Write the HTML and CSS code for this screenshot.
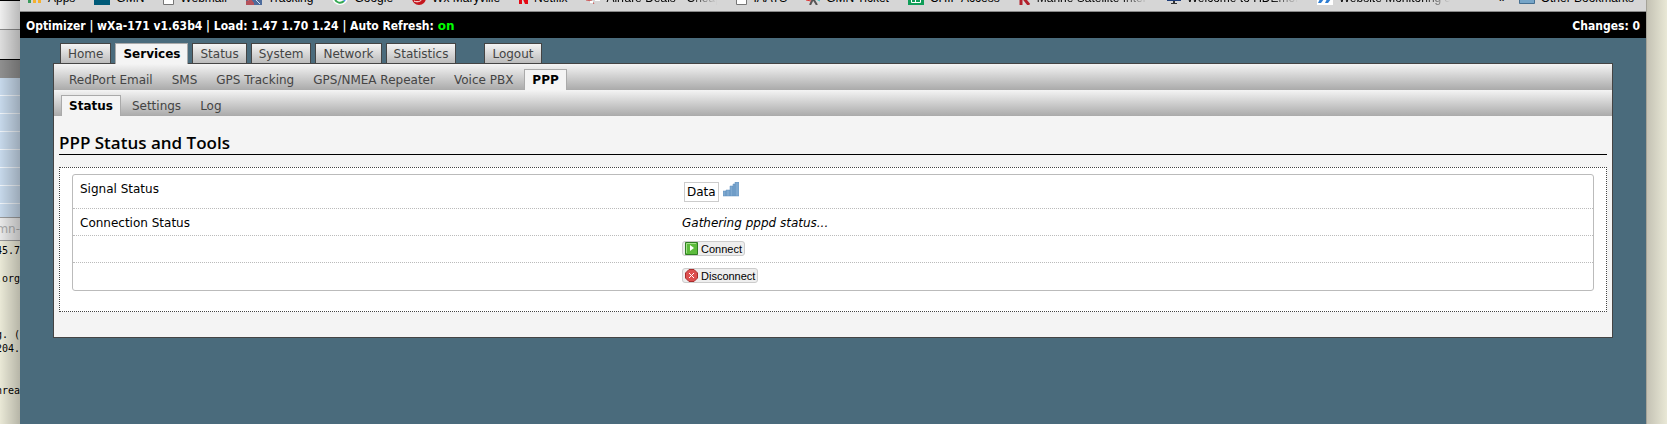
FILE: index.html
```html
<!DOCTYPE html>
<html lang="en">
<head>
    <meta charset="UTF-8">
    <meta name="viewport" content="width=device-width, initial-scale=1.0">
    <title>wXa-171 - PPP Status and Tools</title>
    <link rel="stylesheet" href="styles.css">
</head>
<body>
    <div class="desktop">
        <aside class="back-window">
            <div class="back-title"></div>
            <div class="back-toolbar"></div>
            <div class="back-header"></div>
            <div class="back-list"></div>
            <div class="back-tab">mn-</div>
            <pre class="terminal">
45.7

.org



g. (
204.


hrea</pre>
        </aside>

        <div class="browser">
            <nav class="bookmarks">
                <a href="#"><svg width="14" height="14"><path fill="#3a9b5c" d="M0 9h3v3H0zM0 4h3v3H0z"/><path fill="#f5b02d" d="M5 9h3v3H5zM10 9h3v3h-3zM5 4h3v3H5zM10 4h3v3h-3z"/></svg>Apps</a>
                <a href="#"><svg width="16" height="14"><path fill="#005a78" d="M0 0h16v14H0z"/></svg>GMN</a>
                <a href="#"><svg width="11" height="14"><path fill="#fff" stroke="#777" d="M.5.5h10v13H.5z"/></svg>Webmail</a>
                <a href="#"><svg width="16" height="14"><path fill="#4d6c9c" d="M0 0h16v14H0z"/><path fill="#b5525b" d="M0 14v-4l5-2 3 4v2z"/><path fill="none" stroke="#d8e2ef" d="M2 9l5-3 7 7"/></svg>Tracking</a>
                <a href="#"><svg width="16" height="14"><circle cx="8" cy="6" r="8" fill="#fff"/><path fill="none" stroke="#34a853" stroke-width="2" d="M3 8c1 4 6 5 9 2"/><path fill="none" stroke="#4285f4" stroke-width="2" d="M8 6h5c0 2 0 3-1 4"/></svg>Google</a>
                <a href="#"><svg width="14" height="14"><circle cx="7" cy="7" r="7" fill="#c4161c"/><path fill="none" stroke="#fff" d="M2 10c4 2 8 0 9-4"/></svg>Wx Maryville</a>
                <a href="#"><svg width="9" height="14"><path fill="#e50914" d="M0 0h3l3 7V0h3v13H6L3 6v7H0z"/></svg>Netflix</a>
                <a href="#"><svg width="14" height="14"><path fill="none" stroke="#c55" d="M0 9l6 1 2 3"/><path stroke="#fff" stroke-width="2" d="M4 11h3M9 9h5"/></svg><span class="fade">Airfare Deals - Cheap</span></a>
                <a href="#"><svg width="11" height="14"><path fill="#fff" stroke="#777" d="M.5.5h10v13H.5z"/></svg>IAATS</a>
                <a href="#"><svg width="14" height="14"><path fill="none" stroke="#555" stroke-width="2" d="M6 6l5 8M7 8l-3 6"/><path stroke="#d33" d="M0 9l5 1"/><path stroke="#3bb" d="M10 8l4 2"/></svg>GMN Ticket</a>
                <a href="#"><svg width="16" height="14"><path fill="#0f9d58" d="M0 0h16v14H0z"/><path fill="none" stroke="#fff" d="M3.500 3.500h9v8h-9zM3 8.500h9M7.500 3v8"/></svg>CHIP Access</a>
                <a href="#"><svg width="12" height="14"><path fill="none" stroke="#b3202c" stroke-width="3" d="M2 0v14M3 5l7 9"/></svg><span class="fade">Marine Satellite Inter</span></a>
                <a href="#"><svg width="14" height="14"><path fill="#1d3c78" d="M0 2h14v8H0z"/><path fill="#333" d="M6 10h2v2h2v1H4v-1h2z"/></svg><span class="fade">Welcome to HDEmon</span></a>
                <a href="#"><svg width="16" height="14"><path fill="#fff" d="M0 0h16v14H0z"/><path fill="#2d7dd2" d="M2 4h5v4l-3 4H1l2-4zM9 4h5v4l-3 4H8l2-4z"/></svg><span class="fade">Website Monitoring &amp; S</span></a>
                <a href="#" class="more">»</a>
                <a href="#"><svg width="16" height="14"><path fill="#76a5c8" stroke="#456f91" d="M.5.500h15v12H.5z"/></svg>Other Bookmarks</a>
            </nav>

            <header class="status-bar">
                <div>Optimizer | wXa-171 v1.63b4 | Load: 1.47 1.70 1.24 | Auto Refresh: <span class="on">on</span></div>
                <div>Changes: 0</div>
            </header>

            <div class="page">
                <nav class="main-menu">
                    <a href="#">Home</a>
                    <a href="#" class="active">Services</a>
                    <a href="#">Status</a>
                    <a href="#">System</a>
                    <a href="#">Network</a>
                    <a href="#">Statistics</a>
                    <a href="#" class="logout">Logout</a>
                </nav>

                <main class="content">
                    <nav class="sub-menu">
                        <a href="#">RedPort Email</a>
                        <a href="#">SMS</a>
                        <a href="#">GPS Tracking</a>
                        <a href="#">GPS/NMEA Repeater</a>
                        <a href="#">Voice PBX</a>
                        <a href="#" class="active">PPP</a>
                    </nav>
                    <nav class="sub-menu">
                        <a href="#" class="active">Status</a>
                        <a href="#">Settings</a>
                        <a href="#">Log</a>
                    </nav>

                    <section class="section">
                        <h2>PPP Status and Tools</h2>
                        <div class="panel">
                            <div class="settings">
                                <div class="row row-signal">
                                    <div>Signal Status</div>
                                    <div class="signal">
                                        <span class="signal-type">Data</span>
                                        <svg width="16" height="16" viewBox="0 0 16 16"><path fill="#7fa9d0" stroke="#5f8fbd" stroke-width=".5" d="M0 9h3v5H0zM3 8h4v6H3zM7 4h3v10H7zM10 2h2v12h-2zM12 0h4v14h-4z"/></svg>
                                    </div>
                                </div>
                                <div class="row">
                                    <div>Connection Status</div>
                                    <div><em>Gathering pppd status...</em></div>
                                </div>
                                <div class="row row-button">
                                    <div></div>
                                    <div><button type="button"><svg width="13" height="13" viewBox="0 0 13 13"><path fill="#5cbb3c" stroke="#2f7d22" d="M.5.5h12v12H.5z"/><path fill="none" stroke="#a5e08c" d="M1.500 11V1.500H11"/><path fill="#fff" d="M5 3l4 3-4 3z"/></svg>Connect</button></div>
                                </div>
                                <div class="row row-button">
                                    <div></div>
                                    <div><button type="button"><svg width="13" height="13" viewBox="0 0 13 13"><path fill="#dd4f4f" stroke="#a82c2c" d="M4 .5h5L12.500 4v5L9 12.500H4L.5 9V4z"/><path fill="none" stroke="#fff" d="M4 4l5 5M9 4L4 9"/></svg>Disconnect</button></div>
                                </div>
                            </div>
                        </div>
                    </section>
                </main>
            </div>
        </div>

        <div class="desktop-edge"></div>
    </div>
</body>
</html>
```

FILE: styles.css
```css
:root {
    --page-color: #4a6b7c;
    --content-color: #f4f4f4;
    --border-color: #444;
    --desktop-color: #e9e8d6;
}

* {
    box-sizing: border-box;
}

body {
    margin: 0;
    font-family: Verdana, "DejaVu Sans", sans-serif;
    font-size: 12px;
    line-height: 16px;
    color: #000;
    background: var(--desktop-color);
}

a {
    color: inherit;
    text-decoration: none;
}

.desktop {
    display: grid;
    grid-template-columns: 20px minmax(0, 1fr) 21px;
    height: 100vh;
    overflow: hidden;
}

/* windows behind the browser */
.back-window {
    position: relative;
    overflow: hidden;
}

.back-window::after {
    content: "";
    position: absolute;
    inset: 0;
    background: linear-gradient(to right, transparent, rgba(0, 0, 0, 0.22));
}

.back-title {
    height: 30px;
    border-top: 1px solid #000;
    border-bottom: 1px solid #888;
    background: #eee;
}

.back-toolbar {
    height: 30px;
    border-bottom: 1px solid #000;
    background: #ddd;
}

.back-header {
    height: 18px;
    background: #8f8f8f;
}

.back-list {
    height: 140px;
    border-bottom: 1px solid #999;
    background: repeating-linear-gradient(#c6d8ea 0 17px, #eef3f8 17px 18px);
}

.back-tab {
    display: flex;
    justify-content: flex-end;
    height: 23px;
    border-bottom: 1px solid #999;
    color: #aaa;
    background: #e8e8e8;
    line-height: 22px;
}

.terminal {
    display: flex;
    justify-content: flex-end;
    margin: 3px 0 0;
    font-family: "DejaVu Sans Mono", monospace;
    font-size: 10px;
    line-height: 14px;
}

.desktop-edge {
    border-left: 1px solid #a5a398;
    background: linear-gradient(to right, #c4c2b4, var(--desktop-color));
}

.browser {
    display: flex;
    flex-direction: column;
    background: var(--page-color);
}

/* only the lower edge of the bookmarks bar is in view */
.bookmarks {
    display: flex;
    align-items: flex-end;
    gap: 19px;
    height: 12px;
    padding: 0 12px 0 8px;
    border-bottom: 1px solid #888;
    background: #d6d6d6;
    font-family: "Liberation Sans", Arial, sans-serif;
    overflow: hidden;
    white-space: nowrap;
}

.bookmarks a {
    display: flex;
    flex: none;
    align-items: center;
    gap: 6px;
    height: 26px;
}

.bookmarks .more {
    margin-left: auto;
    margin-right: -6px;
}

.fade {
    width: 111px;
    overflow: hidden;
    mask-image: linear-gradient(to right, #000 75%, transparent);
}

.status-bar {
    display: flex;
    justify-content: space-between;
    padding: 6px 6px 4px;
    color: #fff;
    background: #000;
    font-family: "Lucida Grande", "DejaVu Sans Condensed", sans-serif;
    font-weight: bold;
}

.on {
    color: #0f0;
    font-family: Verdana, "DejaVu Sans", sans-serif;
}

.page {
    padding: 5px 33px;
}

.main-menu {
    display: flex;
    gap: 4px;
    padding-left: 7px;
}

.main-menu a {
    height: 20px;
    padding: 2px 7px 0;
    border: 1px solid var(--border-color);
    border-bottom: none;
    color: #444;
    background: linear-gradient(#f4f4f4, #bbb);
}

.main-menu .active {
    position: relative;
    height: 21px;
    margin-bottom: -1px;
    border-color: #aaa;
    font-weight: bold;
    color: #000;
    background: var(--content-color);
}

.main-menu .logout {
    margin-left: 24px;
}

.content {
    border: 1px solid var(--border-color);
    background: var(--content-color);
}

.sub-menu {
    display: flex;
    gap: 3px;
    height: 26px;
    padding: 5px 7px 0;
    color: #444;
    background: linear-gradient(#f4f4f4, #aaa);
}

.sub-menu a {
    height: 21px;
    padding: 2px 7px 0;
    border: 1px solid transparent;
    border-bottom: none;
}

.sub-menu .active {
    border-color: #aaa;
    font-weight: bold;
    color: #000;
    background: var(--content-color);
}

.section {
    padding: 16px 5px 25px;
}

h2 {
    margin: 0 0 12px;
    border-bottom: 1px solid #000;
    font-family: "Trebuchet MS", "Open Sans", sans-serif;
    font-size: 17px;
    font-weight: 600;
    line-height: 22px;
}

.panel {
    padding: 6px 12px 20px;
    border: 1px dotted var(--border-color);
    background: #fff;
}

.settings {
    border: 1px solid #bbb;
    border-radius: 3px;
}

.row {
    display: grid;
    grid-template-columns: 602px minmax(0, 1fr);
    min-height: 27px;
    padding: 6px 7px 4px;
    border-bottom: 1px dotted #bbb;
}

.row:last-child {
    border-bottom: none;
}

.row-signal {
    padding-bottom: 6px;
}

.signal {
    display: flex;
    align-items: flex-start;
    gap: 4px;
    padding: 1px 0 0 2px;
}

.signal-type {
    padding: 1px 2px;
    border: 1px solid #ccc;
}

.row-button {
    padding: 5px 7px 6px;
}

button {
    display: flex;
    align-items: center;
    gap: 3px;
    height: 15px;
    padding: 0 2px;
    border: 1px solid #ccc;
    border-radius: 3px;
    color: #000;
    background: #eee;
    font-family: "Liberation Sans", Arial, sans-serif;
    font-size: 11px;
}
```
